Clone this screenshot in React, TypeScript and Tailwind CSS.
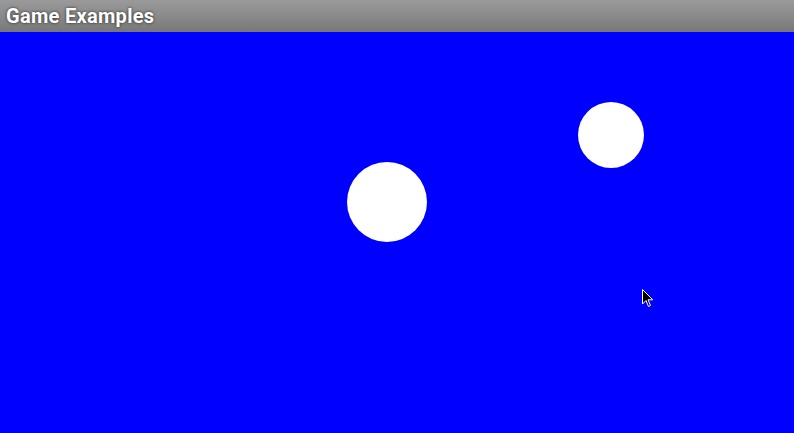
export default function App() {
  return (
    <div className="w-[794px] h-[433px] flex flex-col overflow-hidden" style={{ fontFamily: 'Roboto, "Noto Sans", sans-serif' }}>
      <div className="h-[32px] shrink-0 flex items-center px-[6px] bg-gradient-to-b from-[#9a9a9a] via-[#8a8a8a] to-[#777777]">
        <span className="text-white font-bold text-[20px] leading-none tracking-[0.3px] [text-shadow:0_0_3px_rgba(0,0,0,0.75)]">Game Examples</span>
      </div>
      <div className="relative flex-1 bg-[#0000ff]">
        <div className="absolute left-[347px] top-[130px] w-[80px] h-[80px] rounded-full bg-white" />
        <div className="absolute left-[578px] top-[70px] w-[66px] h-[66px] rounded-full bg-white" />
        <svg className="absolute left-[642px] top-[257px]" width="12" height="19" viewBox="0 0 12 19">
          <path d="M0.5 0.5 L0.5 15 L4 11.5 L6.5 17.5 L8.5 16.5 L6 10.8 L10.8 10.8 Z" fill="black" stroke="white" strokeWidth="1" />
        </svg>
      </div>
    </div>
  );
}
